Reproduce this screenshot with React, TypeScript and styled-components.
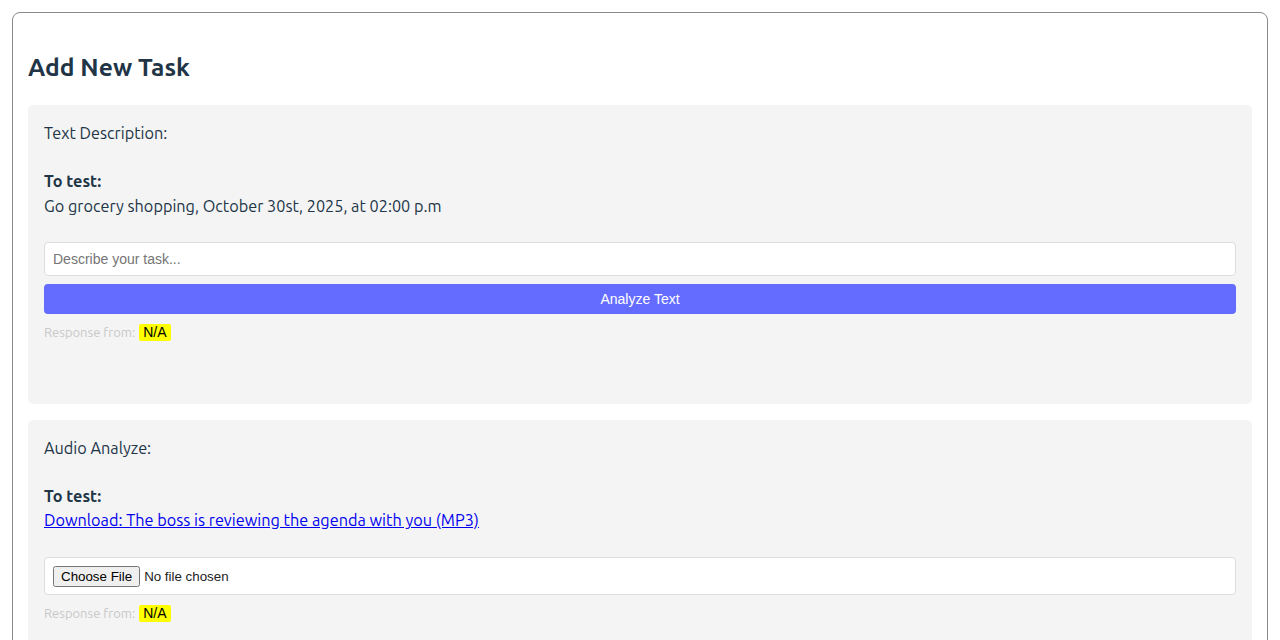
import React from 'react'
import styled, { createGlobalStyle } from 'styled-components'

const GlobalStyle = createGlobalStyle`
  html, body {
    margin: 0;
    padding: 0;
    background: #ffffff;
  }
  body {
    font-family: Ubuntu, 'Open Sans', 'Noto Sans', sans-serif;
    font-size: 16.25px;
    color: #213547;
  }
  * {
    box-sizing: border-box;
  }
`

const Page = styled.div`
  padding: 12px;
`

const Card = styled.div`
  border: 1px solid #8a8a8a;
  border-radius: 8px;
  padding: 16px 15px;
  min-height: 700px;
`

const Heading = styled.h2`
  margin: 22px 0 22px;
  font-size: 24.6px;
  line-height: 32px;
  font-weight: 700;
  color: #213547;
`

const Section = styled.section<{ $padBottom?: number }>`
  background: #f4f4f4;
  border-radius: 5px;
  padding: 16px 16px ${({ $padBottom }) => $padBottom ?? 16}px;
  margin-bottom: 16px;
`

const SectionTitle = styled.div`
  line-height: 24px;
  margin-bottom: 24px;
`

const TestLabel = styled.div`
  font-weight: 700;
  line-height: 24px;
`

const TestText = styled.div`
  line-height: 24px;
  margin-top: 1px;
`

const LinkRow = styled.div`
  line-height: 24px;
  height: 24px;
`

const TestLink = styled.a`
  color: #0000ee;
  text-decoration: underline;
`

const TextInput = styled.input`
  display: block;
  width: 100%;
  margin-top: 24px;
  padding: 8px;
  border: 1px solid #dddddd;
  border-radius: 4px;
  background: #ffffff;
  font-family: 'Liberation Sans', Arial, sans-serif;
  font-size: 14px;
  line-height: 16px;
  color: #213547;
  outline: none;

  &::placeholder {
    color: #757575;
  }
`

const AnalyzeButton = styled.button`
  display: block;
  width: 100%;
  margin-top: 8px;
  padding: 7px 0;
  border: none;
  border-radius: 4px;
  background: #646cff;
  color: #ffffff;
  font-family: 'Liberation Sans', Arial, sans-serif;
  font-size: 14px;
  line-height: 16px;
  cursor: pointer;
`

const FileBox = styled.div`
  margin-top: 25px;
  padding: 0 8px;
  border: 1px solid #dddddd;
  border-radius: 4px;
  background: #ffffff;
  height: 38px;
  display: flex;
  align-items: center;

  input {
    font-family: 'Liberation Sans', Arial, sans-serif;
    font-size: 13.333px;
    color: #222;
  }
`

const Response = styled.div`
  margin-top: 9px;
  font-size: 13px;
  line-height: 18px;
  color: #c8c8c8;
  display: flex;
  align-items: center;
  gap: 4px;
`

const Highlight = styled.span`
  background: #ffff00;
  color: #000000;
  font-family: 'Liberation Sans', Arial, sans-serif;
  font-size: 14px;
  line-height: 17px;
  padding: 0 4px;
  border-radius: 2px;
`

export default function App() {
  return (
    <>
      <GlobalStyle />
      <Page>
        <Card>
          <Heading>Add New Task</Heading>

          <Section $padBottom={63}>
            <SectionTitle>Text Description:</SectionTitle>
            <TestLabel>To test:</TestLabel>
            <TestText>Go grocery shopping, October 30st, 2025, at 02:00 p.m</TestText>
            <TextInput type="text" placeholder="Describe your task..." />
            <AnalyzeButton type="button">Analyze Text</AnalyzeButton>
            <Response>
              Response from: <Highlight>N/A</Highlight>
            </Response>
          </Section>

          <Section $padBottom={63}>
            <SectionTitle>Audio Analyze:</SectionTitle>
            <TestLabel>To test:</TestLabel>
            <LinkRow>
              <TestLink href="#">Download: The boss is reviewing the agenda with you (MP3)</TestLink>
            </LinkRow>
            <FileBox>
              <input type="file" accept="audio/*" />
            </FileBox>
            <Response>
              Response from: <Highlight>N/A</Highlight>
            </Response>
          </Section>
        </Card>
      </Page>
    </>
  )
}
